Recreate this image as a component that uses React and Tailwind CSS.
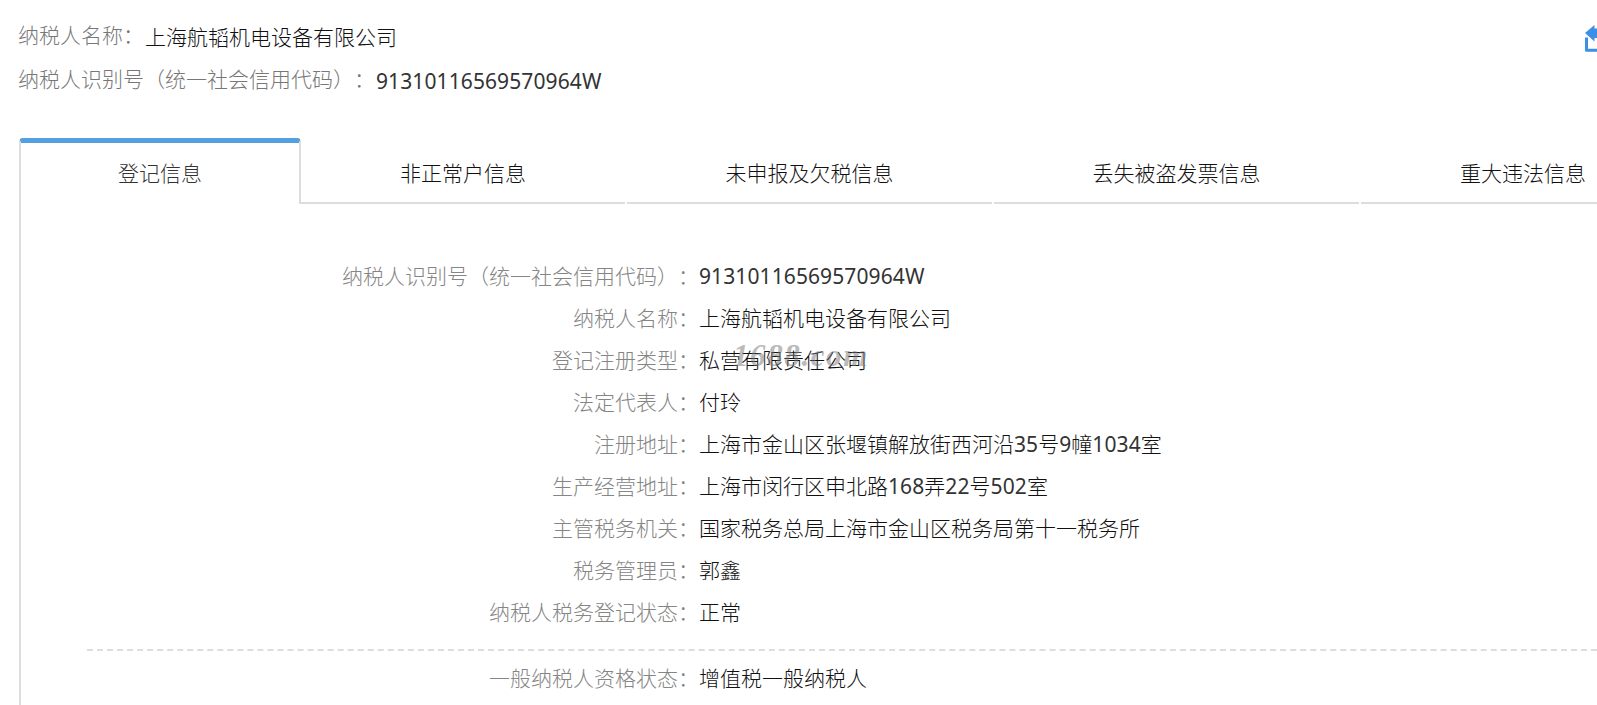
const tabs = [
  { name: '非正常户信息', width: 'w-[324px]' },
  { name: '未申报及欠税信息', width: 'w-[365px]' },
  { name: '丢失被盗发票信息', width: 'w-[365px]' },
  { name: '重大违法信息', width: 'w-[324px]' },
];

const details = [
  ['纳税人识别号（统一社会信用代码）', '91310116569570964W'],
  ['纳税人名称', '上海航韬机电设备有限公司'],
  ['登记注册类型', '私营有限责任公司'],
  ['法定代表人', '付玲'],
  ['注册地址', '上海市金山区张堰镇解放街西河沿35号9幢1034室'],
  ['生产经营地址', '上海市闵行区申北路168弄22号502室'],
  ['主管税务机关', '国家税务总局上海市金山区税务局第十一税务所'],
  ['税务管理员', '郭鑫'],
  ['纳税人税务登记状态', '正常'],
];

// Latin letters and digits are set one weight heavier than the Chinese text
function Value({ text }) {
  return text.split(/([0-9A-Z]+)/).map((part, i) =>
    i % 2 ? <span key={i} className="font-normal tracking-[0.1px] text-[#333333]">{part}</span> : part
  );
}

function HeaderLine({ label, value }) {
  return (
    <div className="flex h-[44px] items-center">
      <span className="text-[#777777]">{label}：</span>
      <span className="pt-[3px] pl-px text-[#111111]"><Value text={value} /></span>
    </div>
  );
}

function DetailRow({ label, value, watermark }) {
  return (
    <div className="flex h-[42px] items-center">
      <span className="w-[678px] shrink-0 text-right text-[#858585]">{label}：</span>
      <span className="relative text-[#111111]">
        <Value text={value} />
        {watermark && (
          <span className="absolute left-[34px] top-[-5px] font-['Liberation_Serif',serif] text-[31px] leading-[31px] font-bold tracking-[1.6px] italic text-[#777777]/50">
            {watermark}
          </span>
        )}
      </span>
    </div>
  );
}

export default function App() {
  return (
    <div className="h-[705px] w-full overflow-hidden bg-white font-['Noto_Sans','Noto_Sans_CJK_SC',sans-serif] text-[21px] leading-[30px] font-light whitespace-nowrap [text-spacing-trim:space-all]">
      <header className="flex h-[138px] justify-between pt-[13px] pl-[18px]">
        <div>
          <HeaderLine label="纳税人名称" value="上海航韬机电设备有限公司" />
          <HeaderLine label="纳税人识别号（统一社会信用代码）" value="91310116569570964W" />
        </div>
        <svg className="mt-[11px] h-[30px] w-[12px]" viewBox="0 0 12 30" fill="none">
          <path d="M0 9L9.5 1V4.5H12V14H9.5V17.5Z" fill="#3b8fe4" />
          <path d="M1.5 13.5V26.3H12" stroke="#3b8fe4" strokeWidth="3" strokeLinejoin="round" />
        </svg>
      </header>

      <nav className="ml-[19px] flex h-[66px] gap-[2px] overflow-hidden">
        <div className="-mr-[2px] flex w-[282px] shrink-0 items-center justify-center rounded-t-[4px] border-x-2 border-t-[5px] border-x-[#dddddd] border-t-[#539fe0] pb-[2px] text-[#333333]">
          登记信息
        </div>
        {tabs.map((tab) => (
          <div
            key={tab.name}
            className={`${tab.width} flex shrink-0 items-center justify-center border-b-2 border-[#dddddd] pt-[5px] text-[#111111]`}
          >
            {tab.name}
          </div>
        ))}
      </nav>

      <main className="ml-[19px] h-[501px] border-l-2 border-[#dddddd] pt-[51px]">
        {details.map(([label, value]) => (
          <DetailRow
            key={label}
            label={label}
            value={value}
            watermark={label === '登记注册类型' ? '1688.com' : null}
          />
        ))}
        <div className="mt-[16px] mb-[6px] ml-[66px] border-t-2 border-dashed border-[#dddddd]" />
        <DetailRow label="一般纳税人资格状态" value="增值税一般纳税人" />
      </main>
    </div>
  );
}
